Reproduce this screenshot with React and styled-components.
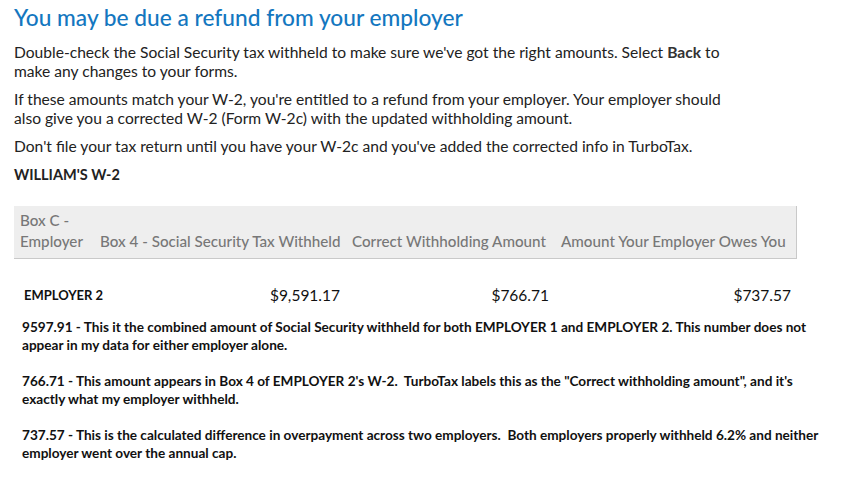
import styled, { createGlobalStyle } from "styled-components";

const GlobalStyle = createGlobalStyle`
    body {
        margin: 0;
        background: #ffffff;
    }
`;

const Page = styled.div`
    padding: 4px 0 0 14px;
    width: 850px;
    box-sizing: border-box;
    font-family: "Lato", "Open Sans", sans-serif;
    color: #222222;
`;

const Title = styled.h1`
    margin: 0 0 11px;
    font-size: 22.7px;
    line-height: 28px;
    font-weight: 500;
    color: #1477bf;
`;

const Text = styled.p`
    margin: 0 0 9px;
    width: 716px;
    font-size: 15.6px;
    line-height: 19px;

    & b {
        font-weight: 700;
        color: #333;
    }
`;

const Label = styled.h2`
    margin: 0 0 22px;
    font-size: 14.5px;
    line-height: 19px;
    font-weight: 700;
    color: #222;
`;

const Table = styled.div`
    display: grid;
    grid-template-columns: 80px 252px 209px 242px;
    width: 783px;
`;

const HeadCell = styled.div`
    display: flex;
    align-items: flex-end;
    background: #eeeeee;
    color: #777777;
    font-size: 15.2px;
    line-height: 21px;
    font-weight: 500;
    padding: 4px 6px 6px;
    border-bottom: 1px solid #c9c9c9;
    border-right: ${(p) => (p.$last ? "1px solid #c9c9c9" : "none")};
    white-space: nowrap;
`;

const Cell = styled.div`
    padding: 26px 6px 0;
    padding-left: ${(p) => (p.$name ? "10px" : "6px")};
    font-size: ${(p) => (p.$name ? "13px" : "15.5px")};
    line-height: 20px;
    font-weight: ${(p) => (p.$name ? 700 : 400)};
    color: #111;
    text-align: ${(p) => (p.$name ? "left" : "right")};
    white-space: nowrap;
`;

const Notes = styled.div`
    margin: 13px 0 0 8px;
    font-weight: 700;
    font-size: 13.6px;
    line-height: 18px;
    color: #111;
`;

const Note = styled.p`
    margin: 0 0 18px;
    width: 805px;
    white-space: pre-wrap;
`;

export default function App() {
    return (
        <>
            <GlobalStyle />
            <Page>
                <Title>You may be due a refund from your employer</Title>
                <Text>
                    Double-check the Social Security tax withheld to make sure we've got the right amounts. Select <b>Back</b> to make any changes to your forms.
                </Text>
                <Text>
                    If these amounts match your W-2, you're entitled to a refund from your employer. Your employer should also give you a corrected W-2 (Form W-2c) with the updated withholding amount.
                </Text>
                <Text>
                    Don't file your tax return until you have your W-2c and you've added the corrected info in TurboTax.
                </Text>
                <Label>WILLIAM'S W-2</Label>
                <Table>
                    <HeadCell>Box C -<br />Employer</HeadCell>
                    <HeadCell>Box 4 - Social Security Tax Withheld</HeadCell>
                    <HeadCell>Correct Withholding Amount</HeadCell>
                    <HeadCell $last>Amount Your Employer Owes You</HeadCell>
                    <Cell $name>EMPLOYER 2</Cell>
                    <Cell>$9,591.17</Cell>
                    <Cell>$766.71</Cell>
                    <Cell>$737.57</Cell>
                </Table>
                <Notes>
                    <Note>9597.91 - This it the combined amount of Social Security withheld for both EMPLOYER 1 and EMPLOYER 2. This number does not appear in my data for either employer alone.</Note>
                    <Note>766.71 - This amount appears in Box 4 of EMPLOYER 2's W-2.  TurboTax labels this as the "Correct withholding amount", and it's exactly what my employer withheld.</Note>
                    <Note>737.57 - This is the calculated difference in overpayment across two employers.  Both employers properly withheld 6.2% and neither employer went over the annual cap.</Note>
                </Notes>
            </Page>
        </>
    );
}
